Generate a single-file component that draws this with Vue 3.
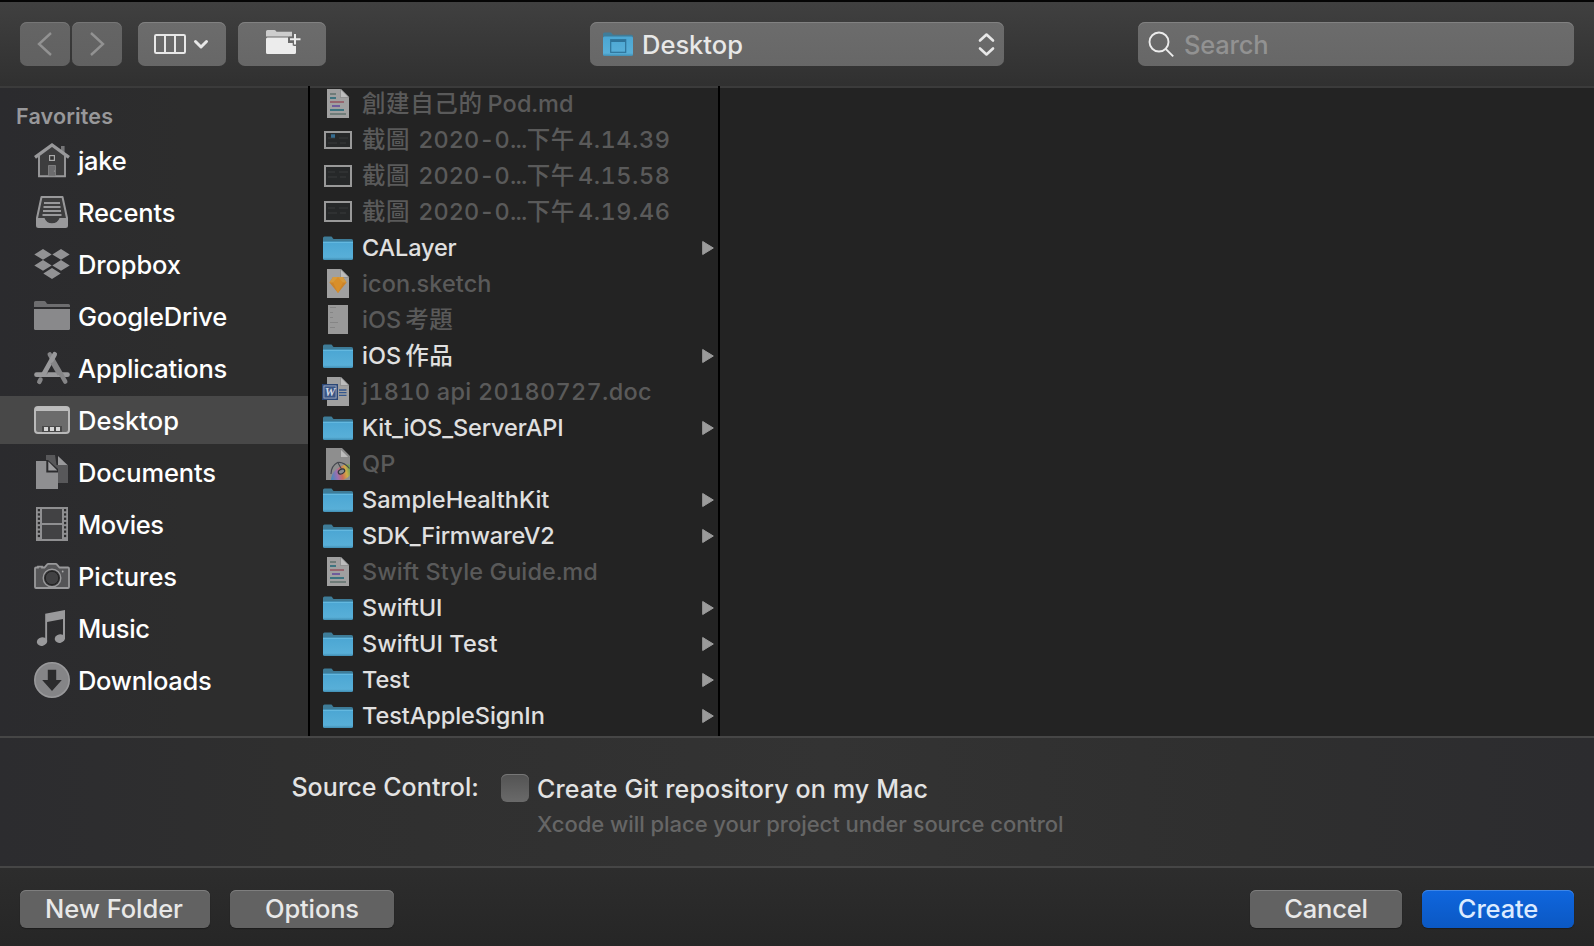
<script setup>
const favorites = [
  { id: 'home', label: 'jake', ls: -0.3 },
  { id: 'recents', label: 'Recents', ls: -0.15 },
  { id: 'dropbox', label: 'Dropbox', ls: -0.12 },
  { id: 'folder', label: 'GoogleDrive', ls: -0.2 },
  { id: 'apps', label: 'Applications', ls: -0.2 },
  { id: 'desktop', label: 'Desktop', ls: 0, active: true },
  { id: 'docs', label: 'Documents', ls: -0.12 },
  { id: 'movies', label: 'Movies', ls: -0.4 },
  { id: 'pictures', label: 'Pictures', ls: -0.08 },
  { id: 'music', label: 'Music', ls: -0.4 },
  { id: 'downloads', label: 'Downloads', ls: -0.28 },
]

// Each name is a list of runs: [text, letter-spacing, gap before the run]
const shotRuns = (time) => [['截圖', 0.6, 0], ['2020-0', 0.05, 8], ['...', -0.7, 0], ['下午', 0.6, 0], [time, 0.55, 3]]
const files = [
  { icon: 'md', runs: [['創建自己的', 0.6, 0], ['Pod.md', 0.15, 5]] },
  { icon: 'shot', y: 9, h: 18, runs: shotRuns('4.14.39') },
  { icon: 'shot', y: 7, h: 22, runs: shotRuns('4.15.58') },
  { icon: 'shot', y: 7, h: 21, runs: shotRuns('4.19.46') },
  { icon: 'folder', runs: [['CALayer', -0.15, 0]] },
  { icon: 'sketch', runs: [['icon.sketch', 0.08, 0]] },
  { icon: 'page', runs: [['iOS', 0, 0], ['考題', 0.6, 4]] },
  { icon: 'folder', runs: [['iOS', 0, 0], ['作品', 0.6, 4]] },
  { icon: 'word', runs: [['j1810 api 20180727.doc', 0.28, 0]] },
  { icon: 'folder', runs: [['Kit_iOS_ServerAPI', -0.12, 0]] },
  { icon: 'paint', runs: [['QP', 0.3, 0]] },
  { icon: 'folder', runs: [['SampleHealthKit', 0, 0]] },
  { icon: 'folder', runs: [['SDK_FirmwareV2', -0.18, 0]] },
  { icon: 'md', runs: [['Swift Style Guide.md', 0.1, 0]] },
  { icon: 'folder', runs: [['SwiftUI', 0, 0]] },
  { icon: 'folder', runs: [['SwiftUI Test', 0.08, 0]] },
  { icon: 'folder', runs: [['Test', -0.1, 0]] },
  { icon: 'folder', runs: [['TestAppleSignIn', -0.07, 0]] },
]
const perforations = [3, 7.3, 11.6, 15.9, 20.2, 24.5, 28.8]
</script>

<template>
  <div class="dialog">
    <svg class="defs" width="0" height="0" aria-hidden="true">
      <defs>
        <linearGradient id="blue" x1="0" y1="0" x2="0" y2="1">
          <stop offset="0" stop-color="#4ba6d3" />
          <stop offset="0.85" stop-color="#58afd8" />
          <stop offset="1" stop-color="#418db2" />
        </linearGradient>
        <linearGradient id="rainbow" x1="0" y1="0.6" x2="1" y2="0.4">
          <stop offset="0" stop-color="#4d86b8" />
          <stop offset="0.3" stop-color="#9a70b0" />
          <stop offset="0.55" stop-color="#cb6b5c" />
          <stop offset="0.8" stop-color="#cfae45" />
          <stop offset="1" stop-color="#6fa05c" />
        </linearGradient>
      </defs>
    </svg>

    <header class="toolbar">
      <div class="nav">
        <button class="tool back">
          <svg width="50" height="44" viewBox="0 0 50 44"><path d="M31 11 19 22l12 11" fill="none" stroke="#929292" stroke-width="2.4" /></svg>
        </button>
        <button class="tool forward">
          <svg width="50" height="44" viewBox="0 0 50 44"><path d="M19 11l12 11-12 11" fill="none" stroke="#929292" stroke-width="2.4" /></svg>
        </button>
      </div>
      <button class="tool view">
        <svg width="88" height="44" viewBox="0 0 88 44" fill="none" stroke="#e8e8e8">
          <rect x="17" y="13" width="30" height="18" rx="1.2" stroke-width="2" />
          <path d="M27 13v18M37 13v18" stroke-width="2" />
          <path d="M57.5 19.5l5.5 5.5 5.5-5.5" stroke-width="3" stroke-linecap="round" stroke-linejoin="round" />
        </svg>
      </button>
      <button class="tool create-folder">
        <svg width="88" height="44" viewBox="0 0 88 44">
          <path d="M28 14.5V9.5Q28 8 29.5 8h7q1.2 0 2 1.7H54v4.8z" fill="#cdcdcd" />
          <path d="M28 17q0-1.5 1.5-1.5H50V21h5.5v3H58v6.5q0 1.5-1.5 1.5h-27q-1.5 0-1.5-1.5z" fill="#ececec" />
          <path d="M57 11v12.5M51 17h12" stroke="#6a6a6a" stroke-width="4.6" />
          <path d="M57 12v10.5M52 17.2h10.5" stroke="#ececec" stroke-width="2" />
        </svg>
      </button>

      <div class="tool location">
        <svg class="loc-icon" width="32" height="36" viewBox="0 0 32 36">
          <path d="M1 13V8q0-1.6 1.5-1.6h6.5l2 2.4H29.5q1.5 0 1.5 1.5V13z" fill="#3f7c99" />
          <rect x="1" y="10.5" width="30" height="19.5" rx="1.5" fill="url(#blue)" />
          <rect x="8.7" y="13.7" width="15" height="12.6" fill="none" stroke="#2e7399" stroke-width="1.2" />
          <path d="M9 15h14.5" stroke="#2e7399" stroke-width="2" />
        </svg>
        <span class="loc-text">Desktop</span>
        <svg class="updown" width="18" height="28" viewBox="0 0 18 28" fill="none" stroke="#e8e8e8" stroke-width="2.6" stroke-linecap="round" stroke-linejoin="round">
          <path d="M3 10.500 9.500 4.500l6.500 6M3 18.500l6.500 6 6.500-6" />
        </svg>
      </div>

      <div class="tool search">
        <svg width="28" height="28" viewBox="0 0 28 28" fill="none" stroke="#ececec" stroke-width="1.900">
          <circle cx="11" cy="12" r="9.500" /><path d="M17.700 18.800l7.500 7.500" />
        </svg>
        <span>Search</span>
      </div>
    </header>

    <main class="browser">
      <aside class="sidebar">
        <h2>Favorites</h2>
        <div v-for="f in favorites" :key="f.id" class="fav" :class="{ active: f.active }">
          <svg width="36" height="36" viewBox="0 0 36 36">
            <g v-if="f.id === 'home'">
              <path d="M27 4h3.600v9L27 10z" fill="#757577" />
              <path d="M5 14v20h26V14L18 4z" fill="#3d3d3e" />
              <path d="M5 14v20.200h26V14" fill="none" stroke="#99999b" stroke-width="1.900" />
              <path d="M1 15.300 18 3l17 12.300" fill="none" stroke="#99999b" stroke-width="3.300" />
              <rect x="15.600" y="13.600" width="4.800" height="4.800" fill="#333" stroke="#aaa" stroke-width="1.200" />
              <path d="M14.500 34V23.500h7V34z" fill="#6c6c6e" stroke="#858587" stroke-width=".8" />
              <circle cx="20.400" cy="29" r=".6" fill="#aaa" />
            </g>
            <g v-else-if="f.id === 'recents'">
              <path d="M7.500 3h21l4.500 21v7.500q0 1.500-1.500 1.500h-27Q3 33 3 31.500V24z" fill="#3d3d3e" stroke="#99999b" stroke-width="2" stroke-linejoin="round" />
              <path d="M3 24h7.500q1.800 5.300 7.500 5.300T25.500 24H33v7.500q0 1.500-1.500 1.500h-27Q3 33 3 31.500z" fill="#99999b" />
              <path d="M10 9h16M9.500 13h17M9 17h18M8.500 21h19" stroke="#99999b" stroke-width="1.800" />
            </g>
            <g v-else-if="f.id === 'dropbox'" fill="#929294">
              <path d="M9 3l8.700 5.400L9 13.800.3 8.400zM27 3l8.700 5.400L27 13.800l-8.700-5.400zM9 14l8.700 5.400L9 24.800.3 19.400zM27 14l8.700 5.400-8.700 5.400-8.700-5.400zM18 22l8.700 5.500L18 33l-8.700-5.500z" />
            </g>
            <g v-else-if="f.id === 'folder'">
              <path d="M0 9V4.500Q0 3 1.500 3h9q1 0 1.700 1.500Q12.800 6 14 6h20.500Q36 6 36 7.500V9z" fill="#6d6d6f" />
              <path d="M0 11h36v19.500q0 1.500-1.500 1.500h-33Q0 32 0 30.500z" fill="#89898b" />
            </g>
            <g v-else-if="f.id === 'apps'" fill="none" stroke-linecap="round">
              <path d="M2.500 24.700h31" stroke="#99999b" stroke-width="4.700" />
              <path d="M15.700 4.300 31.300 31.700" stroke="#858587" stroke-width="4.400" />
              <path d="M20.700 4.300 9.500 24.500" stroke="#99999b" stroke-width="4.700" />
              <path d="M18.500 12.300 25.500 24.500" stroke="#858587" stroke-width="4.400" stroke-linecap="butt" />
              <path d="M5.300 31.800l1.200-2.200" stroke="#858587" stroke-width="4.500" />
              <path d="M13 27.600h13M17 17l-4 7" stroke="#2c2c2d" stroke-width="0.700" opacity=".4" />
            </g>
            <g v-else-if="f.id === 'desktop'">
              <rect x="1" y="5" width="34" height="26" rx="3" fill="#6b6b6b" stroke="#b9b9b9" stroke-width="2" />
              <path d="M1 9V8q0-3 3-3h28q3 0 3 3v1z" fill="#bcbcbc" />
              <path d="M8 24h20v6H8z" fill="#494949" />
              <path d="M10 25h4v4h-4zM16 25h4v4h-4zM22 25h4v4h-4z" fill="#d5d5d5" />
            </g>
            <g v-else-if="f.id === 'docs'">
              <path d="M12 1h9l1.500 10H34v18H24V15L14 6h-2z" fill="#58585a" />
              <path d="M24 2l9.500 9H24z" fill="#9a9a9c" />
              <path d="M2 7h10.300v11.500H24V35H2z" fill="#8f8f91" />
              <path d="M14.300 7.500l9 9h-9z" fill="#9f9fa1" />
            </g>
            <g v-else-if="f.id === 'movies'">
              <path d="M2 1h32v34H2z" fill="#8f8f91" />
              <path d="M8 3h20v14H8zM8 19h20v14H8z" fill="#424244" />
              <g fill="#2c2c2d">
                <template v-for="p in perforations" :key="p">
                  <rect x="3.800" :y="p" width="2.200" height="2.300" /><rect x="30" :y="p" width="2.200" height="2.300" />
                </template>
              </g>
            </g>
            <g v-else-if="f.id === 'pictures'">
              <path d="M1 10.500q0-1 1-1h2V8.600h4v.9h2.500L13 6.600q.5-.7 1.500-.7h7q1 0 1.500.7l2.500 2.900H34q1 0 1 1V29q0 1-1 1H2q-1 0-1-1z" fill="#555557" stroke="#99999b" stroke-width="1.800" />
              <circle cx="18" cy="20" r="8.800" fill="#333335" stroke="#99999b" stroke-width="1.400" />
              <circle cx="18" cy="20" r="6.700" fill="#414143" stroke="#222" stroke-width="1" />
              <circle cx="28.700" cy="13.500" r=".9" fill="#aaa" />
            </g>
            <g v-else-if="f.id === 'music'" fill="#99999b">
              <path d="M11.200 3.700 31 0v29h-2V9L13.100 12.100V32h-1.900z" />
              <ellipse cx="8" cy="31.600" rx="5.200" ry="4.200" transform="rotate(-14 8 31.600)" />
              <ellipse cx="25.900" cy="28.600" rx="5.200" ry="4.200" transform="rotate(-14 25.900 28.600)" />
            </g>
            <g v-else>
              <circle cx="18" cy="18" r="17.200" fill="#858587" stroke="#99999b" stroke-width="1.600" />
              <path d="M13.800 7.700h8.400V18h5.600L18 29 8.200 18h5.600z" fill="#2c2c2d" />
            </g>
          </svg>
          <span :style="{ letterSpacing: f.ls + 'px' }">{{ f.label }}</span>
        </div>
      </aside>

      <section class="column">
        <ul>
          <li v-for="(file, i) in files" :key="i" :class="{ dim: file.icon !== 'folder' }">
            <svg width="32" height="36" viewBox="0 0 32 36">
              <g v-if="file.icon === 'folder'">
                <path d="M1 13V8q0-1.600 1.500-1.600h6.500q1 0 1.500 1.300.5 1.400 1.500 1.400h17.500q1.500 0 1.500 1.500V13z" fill="#3e7c98" />
                <path d="M1 11.500h30v17q0 1.500-1.500 1.500h-27Q1 30 1 28.500z" fill="url(#blue)" />
                <path d="M1 12.500h30" stroke="#6abde2" stroke-width=".8" />
              </g>
              <g v-else-if="file.icon === 'shot'">
                <rect x="3" :y="file.y + 1" width="26" :height="file.h - 2" fill="#262829" stroke="#999" stroke-width="2" />
                <path :d="`M6 ${file.y + 7}h7m4 0h9M6 ${file.y + 12}h9m3 0h6`" stroke="#333436" stroke-width="1.500" />
                <path v-if="i === 1" d="M9 14h4" stroke="#356d91" stroke-width="3.500" />
              </g>
              <g v-else-if="file.icon === 'page'">
                <path d="M6 3h20v29H6z" fill="#999" />
                <path d="M8 5.500h6M8 10.500h3M8 15.500h3M8 20.500h8M8 25.500h5" stroke="#858585" />
              </g>
              <g v-else>
                <path v-if="file.icon === 'paint'" d="M4 2h16l8 8v24H4z" fill="#8e8e8e" />
                <path v-else d="M5 3h14l8 8v21H5z" fill="#a0a0a0" />
                <path d="M18.500 3v8.500H27z" fill="#bdbdbd" stroke="#777" stroke-width=".5" />
                <g v-if="file.icon === 'md'" stroke-width="1.800">
                  <path d="M8 8h6M8 28h16" stroke="#6f7c79" />
                  <path d="M8 12h6M8 24h14" stroke="#3d7480" />
                  <path d="M8 16h14" stroke="#96606a" />
                  <path d="M10 20h8" stroke="#6a559b" />
                </g>
                <g v-else-if="file.icon === 'sketch'">
                  <path d="M11 11h10l3.500 5.500L16 27 7.500 16.500z" fill="#cc8329" />
                  <path d="M11 11h10l3.500 5.500h-17z" fill="#d69a3d" />
                  <path d="M16 11l5 5.500L16 27l-5-10.500z" fill="#d88f2a" />
                </g>
                <g v-else-if="file.icon === 'word'">
                  <path d="M17 16h7.500M17 18.700h7.500M17 21.400h7.500" stroke="#35578d" stroke-width="1.300" />
                  <rect x="0" y="10" width="16" height="16" fill="#2a4676" />
                  <rect x="1.900" y="11.900" width="12.200" height="12.200" fill="#3a5585" stroke="#a3adc0" stroke-width=".9" />
                  <text x="8" y="22.300" text-anchor="middle" class="w">W</text>
                </g>
                <g v-else>
                  <path d="M9 33q1-8 9-12 6-4 10-2v10q-4 5-9 5H9z" fill="url(#rainbow)" />
                  <ellipse cx="19.500" cy="25.500" rx="3.400" ry="2.200" transform="rotate(-28 19.500 25.500)" fill="#8a8d92" stroke="#33363d" stroke-width="1.200" />
                  <path d="M9 28q0-8 6.500-11.500 6-1 12 6M15.500 16l4.500 8" fill="none" stroke="#44474e" stroke-width="1.100" />
                </g>
              </g>
            </svg>
            <span class="name"><span
              v-for="(r, k) in file.runs" :key="k"
              :style="{ letterSpacing: r[1] + 'px', marginLeft: r[2] + 'px' }"
            >{{ r[0] }}</span></span>
            <svg v-if="file.icon === 'folder'" class="arrow" width="12" height="16" viewBox="0 0 12 16"><path d="M.7 1.500v13L11.300 8z" fill="#9b9b9b" stroke="#9b9b9b" stroke-linejoin="round" /></svg>
          </li>
        </ul>
      </section>
      <section class="preview"></section>
    </main>

    <section class="options">
      <span class="label">Source Control:</span>
      <span class="box"></span>
      <div class="choice">
        <p class="git">Create Git repository on my Mac</p>
        <p class="hint">Xcode will place your project under source control</p>
      </div>
    </section>

    <footer>
      <button class="btn new-folder">New Folder</button>
      <button class="btn opts">Options</button>
      <button class="btn cancel">Cancel</button>
      <button class="btn primary">Create</button>
    </footer>
  </div>
</template>

<style>
body { margin: 0; background: #2c2c2d; }
</style>

<style scoped>
.dialog {
  width: 1594px; height: 946px; box-sizing: border-box; overflow: hidden;
  display: flex; flex-direction: column;
  background: #2c2c2d; color: #e3e3e3;
  font-family: Inter, "Noto Sans CJK TC", sans-serif;
  font-size: 25px; font-weight: 500; white-space: nowrap;
}
.defs { position: absolute; }
svg { display: block; flex: none; }
button { border: 0; padding: 0; font: inherit; color: inherit; }
h2, p, ul { margin: 0; padding: 0; }

.toolbar {
  position: relative;
  height: 88px; flex: none; box-sizing: border-box; padding: 20px 20px 0;
  border-top: 2px solid #050505; border-bottom: 2px solid #3b3b3b;
  background: linear-gradient(#404040, #303030);
  display: flex; align-items: flex-start;
}
/* the column dividers run up through the toolbar's bottom edge */
.toolbar::before, .toolbar::after { content: ""; position: absolute; top: 84px; width: 2px; height: 2px; background: #000; }
.toolbar::before { left: 308px; }
.toolbar::after { left: 718px; }
.tool {
  height: 44px; border-radius: 7px; box-sizing: border-box;
  background: linear-gradient(#6c6c6c, #676767);
  box-shadow: inset 0 1px 0 #818181;
  display: flex; align-items: center;
}
.nav { display: flex; gap: 2px; }
.nav .tool { width: 50px; background: linear-gradient(#656565, #616161); box-shadow: inset 0 1px 0 #767676; }
.view { width: 88px; margin-left: 16px; }
.create-folder { width: 88px; margin-left: 12px; }
.location { width: 414px; margin-left: 264px; padding: 0 9px 0 12px; color: #e8e8e8; }
.loc-text { margin-left: 8px; font-size: 25.5px; flex: 1; }
.search { width: 436px; margin-left: 134px; padding-left: 10px; color: #929292; }
.search span { margin-left: 8px; font-size: 25.5px; letter-spacing: -0.2px; }

.browser { height: 648px; flex: none; display: flex; }
.sidebar { width: 308px; border-right: 2px solid #000; background: linear-gradient(90deg, #2b2b2e, #2d2d2d 60%); }
h2 { height: 46px; line-height: 57px; padding-left: 16px; font-size: 21.5px; letter-spacing: 0.15px; font-weight: 600; color: #98989a; }
.fav { height: 48px; margin: 2px 0 4px; padding-left: 34px; display: flex; align-items: center; gap: 8px; color: #fff; font-size: 25.5px; }
.fav.active { background: #484848; }
.fav span { line-height: 48px; padding-top: 2px; }
.column { width: 408px; border-right: 2px solid #000; background: #232323; overflow: hidden; }
ul { list-style: none; margin-top: -2px; }
li { height: 36px; display: flex; align-items: center; padding: 0 4px 0 12px; font-size: 23.5px; color: #e0e0e0; }
.dim { color: #5a5a5a; }
.name { margin-left: 8px; flex: 1; display: flex; line-height: 36px; }
.dim .name { font-feature-settings: "tnum"; }
.w { font: italic bold 12px "Liberation Serif", serif; fill: #d0d6e2; }
.preview { flex: 1; background: #232323; }

.options {
  height: 132px; flex: none; box-sizing: border-box; border-top: 2px solid #464646; border-bottom: 2px solid #464646;
  background: linear-gradient(90deg, #2c2c2f, #2f2f2f 18%, #333 52%, #2f2f2f 78%, #2c2c2f);
  display: flex; align-items: flex-start;
}
.label { width: 479px; text-align: right; line-height: 32px; margin-top: 33px; letter-spacing: 0.08px; }
.box { width: 28px; height: 28px; border-radius: 6px; margin: 36px 0 0 22px; background: linear-gradient(#535353, #6a6a6a); box-shadow: inset 0 1px 0 #777; }
.choice { margin: 35px 0 0 8px; }
.git { line-height: 32px; letter-spacing: 0.16px; }
.hint { line-height: 28px; margin-top: 5px; font-size: 22px; letter-spacing: -0.04px; color: #666; }

footer { flex: 1; padding: 22px 20px 0; display: flex; align-items: flex-start; background: linear-gradient(#2d2d2d, #262626); }
.btn { height: 38px; border-radius: 6px; background: #626262; box-shadow: inset 0 1px 0 #7e7e7e, 0 1px 1px #1c1c1c; color: #e8e8e8; font-size: 25.5px; letter-spacing: -0.15px; line-height: 38px; text-align: center; }
.new-folder { width: 190px; padding-right: 2px; letter-spacing: -0.05px; }
.opts { width: 164px; margin-left: 20px; }
.cancel { width: 152px; margin-left: auto; }
.primary { width: 152px; margin-left: 20px; background: linear-gradient(#0f66de, #0b58c3); box-shadow: inset 0 1px 0 #3f86e6, 0 1px 1px #1c1c1c; color: #dcebff; }
</style>
